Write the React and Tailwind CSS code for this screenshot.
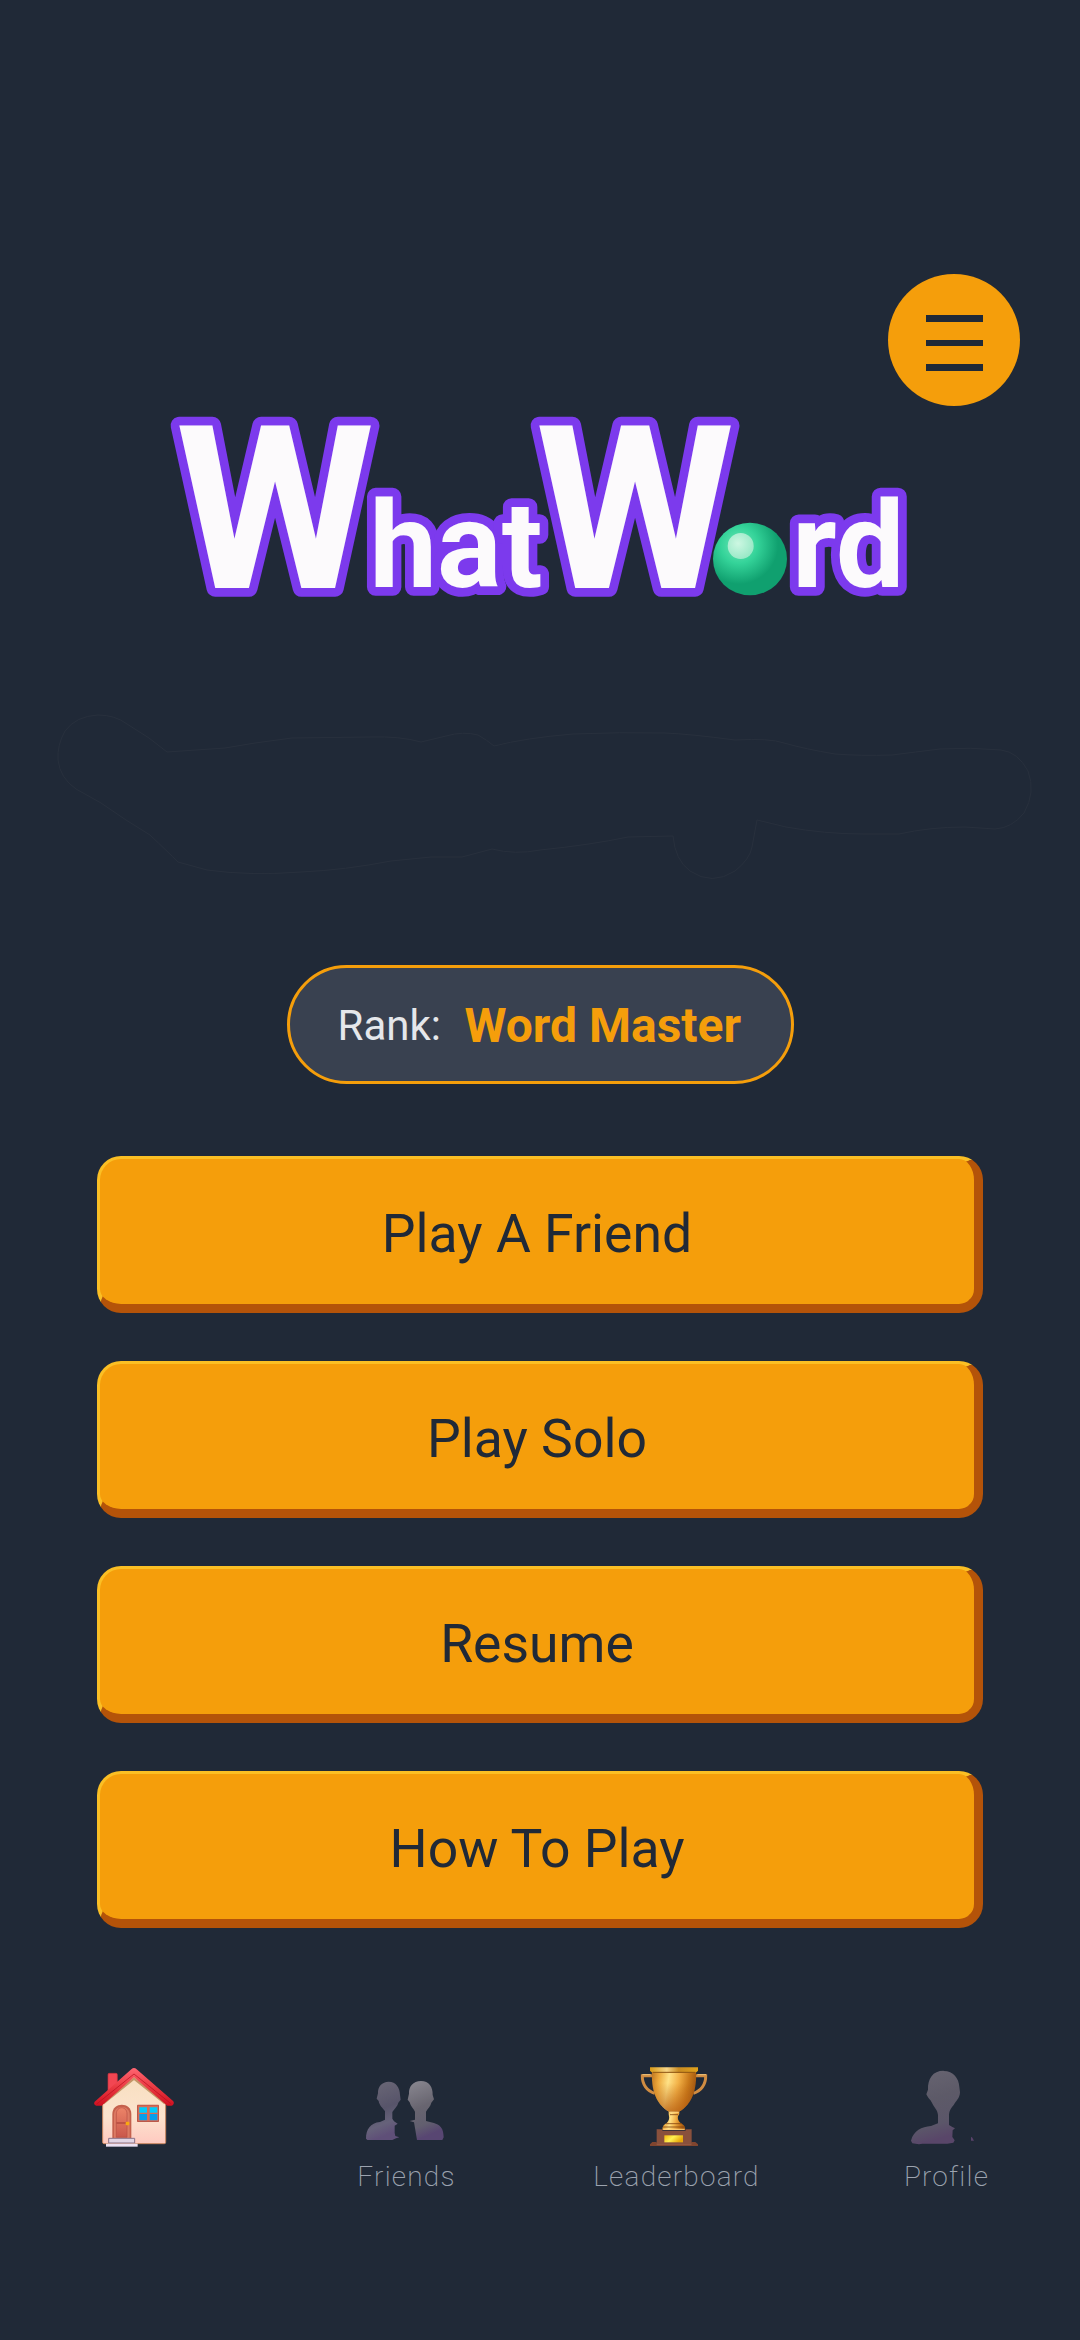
import React from "react";

const BUTTONS = ["Play A Friend", "Play Solo", "Resume", "How To Play"];

function Logo() {
  return (
    <svg className="h-[204px] w-[760px] self-center overflow-visible" viewBox="160 406 760 204" fontFamily="Roboto, sans-serif" fontWeight="700">
      <defs>
        <radialGradient id="ball" gradientUnits="userSpaceOnUse" cx="739" cy="545" r="46">
          <stop offset="0" stopColor="#6ee7b7" />
          <stop offset="0.4" stopColor="#34d399" />
          <stop offset="0.85" stopColor="#10a06f" />
        </radialGradient>
        <radialGradient id="shine" cx="0.4" cy="0.4" r="0.6">
          <stop offset="0" stopColor="#cdf7e2" />
          <stop offset="1" stopColor="#9be9c8" />
        </radialGradient>
      </defs>
      <g fill="#fcfafc" stroke="#7c3aed" strokeWidth="17.5" strokeLinejoin="round" style={{ paintOrder: "stroke" }}>
        <text x="175.5" y="588" fontSize="228" textLength="199" lengthAdjust="spacingAndGlyphs">W</text>
        <text x="369.5" y="587" fontSize="121" textLength="173" lengthAdjust="spacingAndGlyphs">hat</text>
        <text x="535.5" y="588" fontSize="228" textLength="199" lengthAdjust="spacingAndGlyphs">W</text>
        <text x="792" y="587" fontSize="121" textLength="112.5" lengthAdjust="spacingAndGlyphs">rd</text>
      </g>
      <ellipse cx="750" cy="559" rx="37" ry="36.3" fill="url(#ball)" />
      <circle cx="740.7" cy="546" r="13" fill="url(#shine)" />
    </svg>
  );
}

/* Barely visible contour under the logo */
function Contour() {
  return (
    <svg className="mt-[90px] h-[190px] w-full" viewBox="0 700 1080 190" fill="none" stroke="#28303d" strokeWidth="1">
      <path d="M167 752 L149 738 L127 724 Q115 715 98 715 Q76 716 65 731 Q57 745 58 760 Q60 778 76 789 L101 803 L126 820 L150 835 Q168 852 178 862 L207 870 Q250 876 301 872 Q345 870 391 861 L431 857 L462 857 L492 849 Q515 855 540 850 Q590 845 628 837 L673 836 Q675 860 690 871 Q712 886 735 871 Q750 859 752 847 L757 820 L786 827 Q825 834 863 834 L899 834 Q930 827 965 827 L995 829 Q1012 828 1024 813 Q1036 792 1028 771 Q1018 752 1001 750 Q970 747 940 749 Q915 752 892 755 Q860 756 835 754 Q805 749 784 743 Q770 738 735 740 Q690 734 665 733 Q620 732 573 734 Q525 738 494 746 Q487 740 478 735 Q463 731 446 736 L421 742 Q400 736 370 737 L292 738 L255 743 L225 748 Z" />
    </svg>
  );
}

function HouseIcon() {
  return (
    <svg className="size-[100px]" viewBox="45 60 300 300">
      <defs>
        <linearGradient id="wall" x1="0" y1="0" x2="0" y2="1">
          <stop offset="0" stopColor="#f7dfc0" />
          <stop offset="0.6" stopColor="#fce3cd" />
          <stop offset="1" stopColor="#ffc9c0" />
        </linearGradient>
        <linearGradient id="roof" x1="0" y1="0" x2="0" y2="1">
          <stop offset="0" stopColor="#ff6672" />
          <stop offset="0.5" stopColor="#ea3b43" />
          <stop offset="1" stopColor="#cf1020" />
        </linearGradient>
        <linearGradient id="door" x1="0" y1="0" x2="0" y2="1">
          <stop offset="0" stopColor="#ec8468" />
          <stop offset="1" stopColor="#c9574b" />
        </linearGradient>
        <linearGradient id="pane" x1="0" y1="0" x2="0" y2="1">
          <stop offset="0.45" stopColor="#00cdfb" />
          <stop offset="0.55" stopColor="#069fec" />
        </linearGradient>
      </defs>
      <path d="M114 152V104q0-4 4-4h20q4 0 4 4v28z" fill="#f24652" stroke="#c9303c" strokeWidth="2" />
      <path d="M98 184 192 106l95 78v123q0 4-4 4H102q-4 0-4-4z" fill="url(#wall)" stroke="#c9875f" strokeWidth="3" />
      <path d="M100 190 192 116l93 74" fill="none" stroke="#b37e48" strokeWidth="7" opacity="0.75" />
      <path d="M192 84q4 0 8 4l110 96q4 5-1 11l-4 2H292L192 112 95 197H79q-10-5-5-12L184 88q4-4 8-4z" fill="url(#roof)" />
      <path d="m80 192 112-90 112 90" fill="none" stroke="#b90d1c" strokeWidth="3" opacity="0.7" />
      <path d="M127 294v-72c0-37 57-37 57 0v72z" fill="#c5604c" />
      <path d="M132 294v-70c0-31 47-31 47 0v70z" fill="#dd7a63" />
      <path d="M139 292v-70c0-25 32-25 32 0v70z" fill="url(#door)" stroke="#b84f42" strokeWidth="2" />
      <path d="M139 249h32" stroke="#b84f42" strokeWidth="5" />
      <rect x="167" y="245" width="11" height="11" rx="3" fill="#f9a811" />
      <rect x="201" y="194" width="66" height="52" rx="2" fill="#bd5848" />
      <rect x="204" y="197" width="60" height="46" fill="#d76d57" />
      <path d="M208 202h23v16h-23zM239 202h23v16h-23zM208 222h23v19h-23zM239 222h23v19h-23z" fill="url(#pane)" />
      <path d="M116 295h78v14h-78z" fill="#e2d5e4" stroke="#8b7187" strokeWidth="3" />
      <path d="M108 311h95v9h-95z" fill="#ece1f2" />
    </svg>
  );
}

function FriendsIcon() {
  return (
    <svg className="size-[100px]" viewBox="855 60 300 300">
      <defs>
        <linearGradient id="fa" x1="0" y1="0" x2="0.25" y2="1">
          <stop offset="0" stopColor="#6d6a78" />
          <stop offset="0.55" stopColor="#57546a" />
          <stop offset="0.8" stopColor="#66627a" />
          <stop offset="1" stopColor="#5f4f78" />
        </linearGradient>
        <linearGradient id="fb" x1="0" y1="0" x2="0.25" y2="1">
          <stop offset="0" stopColor="#8b8992" />
          <stop offset="0.5" stopColor="#686570" />
          <stop offset="0.8" stopColor="#625f6f" />
          <stop offset="1" stopColor="#584672" />
        </linearGradient>
      </defs>
      <path d="M956 125c22 0 34 18 34 40l2 14-7 9c-2 11-12 18-18 28v20l5 8 11 7-9 6v22l2 9 12 4-10 3-11 5h-75l-4-4c0-28 13-47 42-50l15-7v-25c-6-10-17-17-19-31l-6-7 4-16c-1-20 12-35 32-35z" fill="url(#fa)" />
      <path d="M1053 123c24 0 36 18 35 42l4 13-8 10c-2 11-11 18-16 27v28c15 5 34 5 44 18 8 9 8 20 9 31l-4 8h-76l-5-30-4-23-13-4 16-4v-24c-5-10-13-16-16-28l-6-8 4-18c-1-21 12-38 36-38z" fill="url(#fb)" />
    </svg>
  );
}

function TrophyIcon() {
  return (
    <svg className="size-[100px]" viewBox="165 60 300 300">
      <defs>
        <linearGradient id="cup" x1="0" y1="0" x2="1" y2="0.15">
          <stop offset="0" stopColor="#bd7420" />
          <stop offset="0.18" stopColor="#eda93c" />
          <stop offset="0.4" stopColor="#ffe287" />
          <stop offset="0.62" stopColor="#f3b248" />
          <stop offset="0.85" stopColor="#c9791a" />
          <stop offset="1" stopColor="#a65b12" />
        </linearGradient>
        <linearGradient id="cupShade" x1="0" y1="0" x2="0" y2="1">
          <stop offset="0.3" stopColor="#b65e12" stopOpacity="0" />
          <stop offset="1" stopColor="#b65e12" stopOpacity="0.75" />
        </linearGradient>
        <linearGradient id="rim" x1="0" y1="0" x2="1" y2="0">
          <stop offset="0" stopColor="#d99a16" />
          <stop offset="0.35" stopColor="#f8d687" />
          <stop offset="0.6" stopColor="#c98b22" />
          <stop offset="1" stopColor="#e0a21b" />
        </linearGradient>
        <linearGradient id="plate" x1="0" y1="0" x2="1" y2="0.4">
          <stop offset="0" stopColor="#f2b80e" />
          <stop offset="0.5" stopColor="#fff052" />
          <stop offset="1" stopColor="#e7a70a" />
        </linearGradient>
      </defs>
      <path d="M246 107h-29c-1 26 14 46 37 53M378 107h29c1 26-14 46-37 53" fill="none" stroke="#d08c42" strokeWidth="9" />
      <path d="M242 104h-25M382 104h26" stroke="#f4c67c" strokeWidth="3" />
      <path d="M246 92h132c3 53-10 99-51 123h-30c-41-24-54-70-51-123z" fill="url(#cup)" />
      <path d="M246 92h132c3 53-10 99-51 123h-30c-41-24-54-70-51-123z" fill="url(#cupShade)" />
      <path d="M240 82h144v10q-4 6-12 6H252q-8 0-12-6z" fill="url(#rim)" />
      <path d="M248 97h128" stroke="#8d5311" strokeWidth="3" />
      <path d="M296 215h32v7l-4 7c-2 7 1 15 8 20 8 4 14 10 14 21h-69c0-11 5-17 13-21 6-5 9-13 7-20l-1-7z" fill="url(#cup)" />
      <path d="M300 224h24M288 251h48M279 261h66" stroke="#864611" strokeWidth="2.5" />
      <path d="M298 217h28M280 268h64" stroke="#ffd27c" strokeWidth="3" />
      <path d="M260 268h17v4h70v-4h18v38h-105z" fill="#89503c" />
      <path d="M240 318v-5l7-7h11l7 5h95l6-5h10l8 7v5z" fill="#80452f" />
      <path d="M260 306h105v8h-105z" fill="#89503c" />
      <path d="M260 314h104" stroke="#a0624a" strokeWidth="2" />
      <rect x="283" y="286" width="56" height="21" fill="url(#plate)" />
    </svg>
  );
}

function ProfileIcon() {
  return (
    <svg className="size-[100px]" viewBox="975 60 300 300">
      <defs>
        <linearGradient id="pa" x1="0" y1="0" x2="0.2" y2="1">
          <stop offset="0" stopColor="#686572" />
          <stop offset="0.45" stopColor="#5d5a68" />
          <stop offset="0.8" stopColor="#5b5669" />
          <stop offset="1" stopColor="#594669" />
        </linearGradient>
      </defs>
      <path d="M1121 93c29 0 46 22 47 48l2 16c-1 19-12 25-19 38-9 11-14 18-14 33v27l10 6 8 4-7 6-1 20 7 10-4 7-18 3h-75l-10 2-20-3-4-8c8-31 32-41 60-44l21-8v-25c-1-15-12-22-19-38-5-10-8-10-11-15l-5-9 5-14c-1-33 14-57 47-57z" fill="url(#pa)" />
      <path d="m1203 290 4 3 5 9h-9z" fill="#59426b" />
    </svg>
  );
}

const NAV = [
  { Icon: HouseIcon, label: "" },
  { Icon: FriendsIcon, label: "Friends" },
  { Icon: TrophyIcon, label: "Leaderboard" },
  { Icon: ProfileIcon, label: "Profile" },
];

export default function App() {
  return (
    <main className="flex h-[2340px] w-[1080px] flex-col overflow-hidden bg-[#202937] font-['Roboto',sans-serif]">
      <header className="flex justify-end pt-[274px] pr-[60px]">
        <button aria-label="Menu" className="flex size-[132px] items-center justify-center rounded-full bg-[#f59e0b]">
          <span className="flex w-[57px] flex-col gap-[18px] pt-[6px]">
            <span className="h-[6.5px] bg-[#202937]" />
            <span className="h-[6.5px] bg-[#202937]" />
            <span className="h-[6.5px] bg-[#202937]" />
          </span>
        </button>
      </header>

      <Logo />
      <Contour />

      <div className="mt-[75px] flex h-[119px] w-[507px] items-center self-center rounded-full border-[3px] border-[#f59e0b] bg-[#394150] pt-[3px] pl-[48px]">
        <span className="w-[127px] text-[42px] leading-none text-[#e5e7eb]">Rank:</span>
        <span className="text-[48px] leading-none font-bold whitespace-nowrap text-[#f59e0b]">Word Master</span>
      </div>

      <div className="mt-[72px] flex flex-col gap-12 px-[97px]">
        {BUTTONS.map((label) => (
          <button
            key={label}
            className="h-[157px] rounded-[24px] border-t-[3px] border-r-[9px] border-b-[9px] border-l-[3px] border-t-[#fbbf24] border-r-[#b45309] border-b-[#b45309] border-l-[#fbbf24] bg-[#f59e0b] pt-[5px] text-[53.5px] leading-none text-[#202937]"
          >
            {label}
          </button>
        ))}
      </div>

      <nav className="mt-[132px] grid grid-cols-4">
        {NAV.map(({ Icon, label }) => (
          <div key={label} className="flex flex-col items-center">
            <Icon />
            <span className="pl-[3px] text-[28px] leading-[33px] font-extralight tracking-[1.2px] text-[#9ca3af]">{label}</span>
          </div>
        ))}
      </nav>
    </main>
  );
}
